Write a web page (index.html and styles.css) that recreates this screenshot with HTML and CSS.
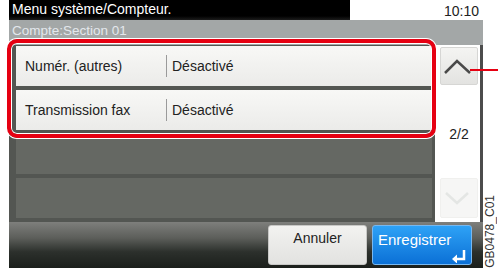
FILE: index.html
```html
<!DOCTYPE html>
<html lang="fr">
<head>
  <meta charset="UTF-8" />
  <meta name="viewport" content="width=device-width, initial-scale=1.0"/>
  <title>Compteur</title>
  <link rel="stylesheet" href="styles.css">
</head>
<body>

  <div class="screen">
    <div class="topbar">
      <div class="title">Menu système/Compteur.</div>
      <div class="clock">10:10</div>
    </div>
    <div class="subbar">Compte:Section 01</div>

    <div class="main">
      <div class="list">
        <div class="row">
          <span class="label">Numér. (autres)</span>
          <span class="value">Désactivé</span>
        </div>
        <div class="row">
          <span class="label">Transmission fax</span>
          <span class="value">Désactivé</span>
        </div>
        <div class="row empty"></div>
        <div class="row empty"></div>
      </div>

      <div class="scroll">
        <button type="button" class="arrow up">
          <svg width="36" height="36" viewBox="0 0 36 36"><polyline points="4,25 16,13 29,25" fill="none" stroke="#4a4a4a" stroke-width="2.5" /></svg>
        </button>
        <span class="page">2/2</span>
        <button type="button" class="arrow down">
          <svg width="36" height="38" viewBox="0 0 36 38"><polyline points="5,14 16,24 27,14" fill="none" stroke="#e4e6e4" stroke-width="2.5" /></svg>
        </button>
      </div>
    </div>

    <div class="footer">
      <button type="button" class="btn cancel">Annuler</button>
      <button type="button" class="btn primary">
        <span>Enregistrer</span>
        <svg class="enter" width="16" height="14" viewBox="0 0 16 14"><path d="M13 1 V10 H5" fill="none" stroke="#fff" stroke-width="2.5" /><polygon points="1,10 6,5.5 6,14.5" fill="#fff" /></svg>
      </button>
    </div>
  </div>

  <div class="code">GB0478_C01</div>

  <!-- annotation -->
  <div class="highlight"></div>
  <div class="pointer"></div>

</body>
</html>
```

FILE: styles.css
```css
body {
  margin: 0;
  width: 498px;
  height: 273px;
  position: relative;
  display: flex;
  background: #fff;
  font-family: "Liberation Sans", Arial, sans-serif;
  overflow: hidden;
}

.screen {
  margin-left: 9px;
  width: 474px;
  display: flex;
  flex-direction: column;
}

.topbar {
  display: flex;
  height: 20px;
}

.title {
  width: 341px;
  background: linear-gradient(#000 80%, #1c1c1c);
  color: #fff;
  font-size: 14px;
  line-height: 19px;
  padding-left: 3px;
  box-sizing: border-box;
}

.clock {
  flex: 1;
  text-align: right;
  padding-right: 4px;
  font-size: 14px;
  line-height: 23px;
  color: #222;
}

.subbar {
  height: 25px;
  background: #a3a7a7;
  color: #e3e7ec;
  font-size: 13.5px;
  line-height: 22px;
  padding-left: 3px;
}

.main {
  display: flex;
  height: 177px;
}

.list {
  width: 426px;
  background: #535652;
  padding: 1px 3px 0 7px;
  box-sizing: border-box;
  display: flex;
  flex-direction: column;
  gap: 4px;
}

.row {
  height: 40px;
  flex-shrink: 0;
  display: flex;
  align-items: center;
  background: linear-gradient(#f8f8f6, #ebebe9);
  font-size: 14px;
  color: #222;
}

.row.empty {
  background: #656863;
}

.label {
  width: 150px;
  padding-left: 9px;
  box-sizing: border-box;
}

.value {
  border-left: 1px solid #9a9a9a;
  padding-left: 5px;
  line-height: 22px;
}

.scroll {
  width: 48px;
  box-sizing: border-box;
  background: #fff;
  border-right: 3px solid #4c4c4c;
  padding: 2px 2px 4px 5px;
  display: flex;
  flex-direction: column;
  justify-content: space-between;
  align-items: center;
}

.arrow {
  width: 38px;
  height: 38px;
  padding: 0;
  border: 1px solid #d6d6d4;
  border-radius: 2px;
  background: linear-gradient(#f4f4f2, #e3e3e1);
  box-sizing: border-box;
  display: flex;
}

.arrow.down {
  height: 40px;
  border-color: #f0f0ee;
  background: #f6f6f5;
}

.page {
  font-size: 14px;
  color: #222;
  padding-top: 4px;
}

.footer {
  height: 46px;
  background: linear-gradient(#7e7f7c, #5c5e5a 35%, #2c302c 65%, #1b1f1b);
  display: flex;
  justify-content: flex-end;
  align-items: flex-start;
  gap: 5px;
  padding: 3px 11px 0 0;
  box-sizing: border-box;
}

.btn {
  height: 40px;
  border-radius: 3px;
  font-family: inherit;
  box-sizing: border-box;
}

.btn.cancel {
  width: 99px;
  border: 1px solid #c8c8c6;
  background: linear-gradient(#f2f2f0, #e2e2e0);
  color: #222;
  font-size: 14px;
  padding: 0 0 14px;
}

.btn.primary {
  width: 100px;
  border: 1px solid #78b8f0;
  background: linear-gradient(#2ea2f6, #0b70d6);
  color: #fff;
  font-size: 15px;
  padding: 5px 4px 0 5px;
  display: flex;
  flex-direction: column;
  align-items: flex-start;
}

.enter {
  align-self: flex-end;
  margin-top: 1px;
}

.code {
  writing-mode: vertical-rl;
  transform: rotate(180deg);
  align-self: flex-end;
  margin: 0 0 5px 0;
  font-size: 12px;
  line-height: 14px;
  color: #333;
}

.highlight {
  position: absolute;
  left: 7px;
  top: 39px;
  width: 429px;
  height: 99px;
  box-sizing: border-box;
  border: 4px solid #e60012;
  border-radius: 10px;
  box-shadow: 0 0 0 1px #fff, inset 0 0 0 1px #fff;
}

.pointer {
  position: absolute;
  left: 470px;
  top: 69px;
  width: 28px;
  height: 2px;
  background: #e60012;
}
```
